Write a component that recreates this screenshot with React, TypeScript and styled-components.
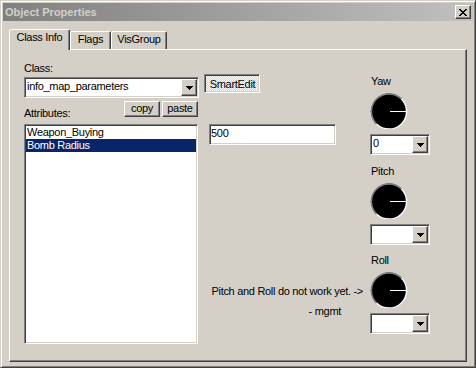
import React from "react";
import styled, { createGlobalStyle, css } from "styled-components";

const GlobalStyle = createGlobalStyle`
  html, body {
    margin: 0;
    padding: 0;
    background: #d4d0c8;
  }
  body {
    font-family: "Liberation Sans", Arial, sans-serif;
    font-size: 11px;
    letter-spacing: -0.3px;
    color: #000;
  }
  * {
    box-sizing: border-box;
  }
`;

const raised = css`
  background: #d4d0c8;
  border: 1px solid;
  border-color: #fff #404040 #404040 #fff;
  box-shadow: inset -1px -1px #808080;
`;

const sunken = css`
  background: #fff;
  border: 1px solid;
  border-color: #808080 #fff #fff #808080;
  box-shadow: inset 1px 1px #404040, inset -1px -1px #d4d0c8;
  padding: 1px;
`;

const Window = styled.div`
  width: 476px;
  height: 368px;
  background: #d4d0c8;
  border: 1px solid;
  border-color: #d4d0c8 #404040 #404040 #d4d0c8;
  box-shadow: inset 1px 1px #fff, inset -1px -1px #808080;
  padding: 2px;
  display: flex;
  flex-direction: column;
`;

const TitleBar = styled.div`
  height: 18px;
  display: flex;
  align-items: center;
  justify-content: space-between;
  padding: 0 2px;
  background: linear-gradient(to right, #808080, #c0c0c0);
  color: #d4d0c8;
  font-weight: bold;
  letter-spacing: 0;
  line-height: 18px;
`;

const CloseButton = styled.div`
  ${raised};
  width: 16px;
  height: 14px;
  display: flex;
  align-items: center;
  justify-content: center;
`;

const TabArea = styled.div`
  padding: 8px 6px 0;
`;

const TabStrip = styled.div`
  display: flex;
  align-items: flex-end;
  height: 20px;
`;

const Tab = styled.div<{ $active?: boolean; $w: number }>`
  width: ${(p) => p.$w}px;
  height: ${(p) => (p.$active ? 21 : 18)}px;
  margin-bottom: ${(p) => (p.$active ? -1 : 0)}px;
  position: relative;
  z-index: ${(p) => (p.$active ? 1 : 0)};
  background: #d4d0c8;
  border: 1px solid;
  border-bottom: none;
  border-color: #fff #404040 transparent #fff;
  border-radius: 2px 2px 0 0;
  box-shadow: inset -1px 0 #808080;
  padding-top: 1px;
  line-height: 13px;
  text-align: center;
`;

const Panel = styled.div`
  width: 458px;
  height: 313px;
  border: 1px solid;
  border-color: #fff #404040 #404040 #fff;
  box-shadow: inset -1px -1px #808080;
  padding: 12px 0 0 14px;
  display: flex;
`;

const LeftBlock = styled.div`
  width: 341px;
  display: flex;
  flex-direction: column;
`;

const Label = styled.div<{ $top?: number }>`
  line-height: 13px;
  height: 12px;
  margin-top: ${(p) => p.$top ?? 0}px;
`;

const Row = styled.div<{ $top?: number; $w?: number }>`
  display: flex;
  align-items: flex-start;
  margin-top: ${(p) => p.$top ?? 0}px;
  ${(p) => (p.$w ? `width: ${p.$w}px; justify-content: space-between;` : "")}
`;

const ComboBox = styled.div<{ $w: number; $top?: number }>`
  ${sunken};
  width: ${(p) => p.$w}px;
  height: 21px;
  margin-top: ${(p) => p.$top ?? 0}px;
  display: flex;
`;

const ComboText = styled.div`
  flex: 1;
  padding: 1px 0 0 1px;
  line-height: 13px;
`;

const DropButton = styled.div`
  ${raised};
  width: 16px;
  height: 17px;
  display: flex;
  align-items: center;
  justify-content: center;
`;

const PushButton = styled.div<{ $w: number; $h: number; $checked?: boolean }>`
  ${(p) =>
    p.$checked
      ? css`
          border: 1px solid;
          border-color: #808080 #fff #fff #808080;
          box-shadow: inset 1px 1px #404040, inset -1px -1px #d4d0c8;
          background-color: #fff;
          background-image: conic-gradient(
            #d4d0c8 25%,
            transparent 0 50%,
            #d4d0c8 0 75%,
            transparent 0
          );
          background-size: 2px 2px;
          padding-top: 3px;
          padding-left: 1px;
          margin-left: 5px;
        `
      : css`
          ${raised};
          padding-top: 0px;
        `}
  width: ${(p) => p.$w}px;
  height: ${(p) => p.$h}px;
  line-height: 13px;
  text-align: center;
`;

const ButtonGroup = styled.div`
  display: flex;
  gap: 2px;
`;

const Body = styled.div`
  display: flex;
  margin-top: 5px;
`;

const ListBox = styled.div`
  ${sunken};
  width: 174px;
  height: 220px;
`;

const ListItem = styled.div<{ $selected?: boolean }>`
  height: 13px;
  line-height: 12px;
  padding-left: 1px;
  background: ${(p) => (p.$selected ? "#0a246a" : "transparent")};
  color: ${(p) => (p.$selected ? "#fff" : "#000")};
`;

const MiddleCol = styled.div`
  width: 156px;
  margin-left: 11px;
  display: flex;
  flex-direction: column;
`;

const TextField = styled.div`
  ${sunken};
  width: 127px;
  height: 21px;
  padding: 2px 0 0 1px;
  line-height: 13px;
`;

const Note = styled.div<{ $top: number; $right: number }>`
  display: flex;
  justify-content: flex-end;
  white-space: nowrap;
  margin-top: ${(p) => p.$top}px;
  padding-right: ${(p) => p.$right}px;
  line-height: 13px;
`;

const RightCol = styled.div`
  width: 60px;
  margin-left: 5px;
  padding-top: 13px;
  display: flex;
  flex-direction: column;
`;

const DialGroup = styled.div<{ $top?: number }>`
  display: flex;
  flex-direction: column;
  margin-top: ${(p) => p.$top ?? 0}px;
`;

const DialLabel = styled.div`
  line-height: 13px;
  padding-left: 1px;
`;

const DialFace = styled.svg`
  display: block;
  margin-top: 4px;
  margin-bottom: 3px;
`;

const CloseIcon = () => (
  <svg width="8" height="7" viewBox="0 0 8 7" shapeRendering="crispEdges">
    <path
      d="M0 0h2v1h-2zM6 0h2v1h-2zM1 1h2v1h-2zM5 1h2v1h-2zM2 2h4v1h-4zM3 3h2v1h-2zM2 4h4v1h-4zM1 5h2v1h-2zM5 5h2v1h-2zM0 6h2v1h-2zM6 6h2v1h-2z"
      fill="#000"
    />
  </svg>
);

const ArrowDown = () => (
  <svg width="7" height="4" viewBox="0 0 7 4" shapeRendering="crispEdges">
    <path d="M0 0h7v1h-1v1h-1v1h-1v1h-1v-1h-1v-1h-1v-1h-1z" fill="#000" />
  </svg>
);

const Dial = () => {
  const cx = 19;
  const cy = 19.5;
  const r = 17.6;
  const d = r * Math.SQRT1_2;
  return (
    <DialFace width="39" height="39" viewBox="0 0 39 39">
      <circle cx={cx} cy={cy} r={18} fill="#000" />
      <path
        d={`M${cx - d} ${cy + d} A${r} ${r} 0 0 1 ${cx + d} ${cy - d}`}
        fill="none"
        stroke="#808080"
        strokeWidth="1.5"
      />
      <path
        d={`M${cx + d} ${cy - d} A${r} ${r} 0 0 1 ${cx - d} ${cy + d}`}
        fill="none"
        stroke="#fff"
        strokeWidth="1.5"
      />
      <rect x="0" y="19" width="2" height="1" fill="#808080" />
      <rect x="20" y="19" width="16" height="1" fill="#fff" />
    </DialFace>
  );
};

const Combo = ({ w, value, top }: { w: number; value?: string; top?: number }) => (
  <ComboBox $w={w} $top={top}>
    <ComboText>{value}</ComboText>
    <DropButton>
      <ArrowDown />
    </DropButton>
  </ComboBox>
);

const angles = [
  { name: "Yaw", value: "0", top: 0 },
  { name: "Pitch", value: "", top: 10 },
  { name: "Roll", value: "", top: 9 },
];

export default function App() {
  return (
    <>
      <GlobalStyle />
      <Window>
        <TitleBar>
          <span>Object Properties</span>
          <CloseButton>
            <CloseIcon />
          </CloseButton>
        </TitleBar>
        <TabArea>
          <TabStrip>
            <Tab $active $w={61}>Class Info</Tab>
            <Tab $w={41}>Flags</Tab>
            <Tab $w={56}>VisGroup</Tab>
          </TabStrip>
          <Panel>
            <LeftBlock>
              <Label>Class:</Label>
              <Row>
                <Combo w={175} value="info_map_parameters" top={3} />
                <PushButton $checked $w={56} $h={19}>
                  SmartEdit
                </PushButton>
              </Row>
              <Row $top={3} $w={174}>
                <Label $top={6}>Attributes:</Label>
                <ButtonGroup>
                  <PushButton $w={36} $h={16}>copy</PushButton>
                  <PushButton $w={36} $h={16}>paste</PushButton>
                </ButtonGroup>
              </Row>
              <Body>
                <ListBox>
                  <ListItem>Weapon_Buying</ListItem>
                  <ListItem $selected>Bomb Radius</ListItem>
                </ListBox>
                <MiddleCol>
                  <TextField>500</TextField>
                  <Note $top={140} $right={2}>
                    <span>Pitch and Roll do not work yet. -&gt;</span>
                  </Note>
                  <Note $top={7} $right={24}>
                    <span>- mgmt</span>
                  </Note>
                </MiddleCol>
              </Body>
            </LeftBlock>
            <RightCol>
              {angles.map((a) => (
                <DialGroup key={a.name} $top={a.top}>
                  <DialLabel>{a.name}</DialLabel>
                  <Dial />
                  <Combo w={60} value={a.value} />
                </DialGroup>
              ))}
            </RightCol>
          </Panel>
        </TabArea>
      </Window>
    </>
  );
}
